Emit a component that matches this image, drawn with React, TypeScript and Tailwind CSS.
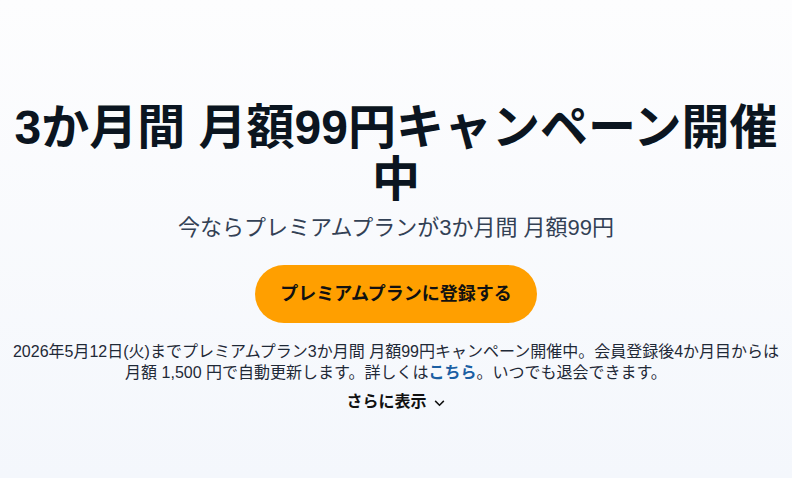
import React from 'react';

const font = { fontFamily: '"Liberation Sans", "Noto Sans CJK JP", sans-serif' };

export default function App() {
  return (
    <div
      className="min-h-[478px] w-full bg-gradient-to-b from-[#fdfdfe] to-[#f4f7fc] text-center"
      style={font}
    >
      <div className="mx-auto flex flex-col items-center px-2 pt-[102px]">
        <h1 className="text-[48px] font-bold leading-[52px] text-[#0b1520]">
          3か月間 月額99円キャンペーン開催中
        </h1>
        <p className="mt-[7px] text-[22px] leading-[30px] text-[#334155]">
          今ならプレミアムプランが3か月間 月額99円
        </p>
        <button className="mt-[22px] h-[58px] w-[282px] rounded-full bg-[#ff9f00] text-[18px] font-bold text-[#111]">
          プレミアムプランに登録する
        </button>
        <p className="mt-[18px] text-[16px] leading-[21px] text-[#1f2937]">
          2026年5月12日(火)までプレミアムプラン3か月間 月額99円キャンペーン開催中。会員登録後4か月目からは
          <br />
          月額 1,500 円で自動更新します。詳しくは
          <a className="font-bold text-[#1b5fa3]">こちら</a>
          。いつでも退会できます。
        </p>
        <button className="mt-[9px] flex items-center gap-[6px] text-[16px] font-bold leading-[20px] text-[#111]">
          さらに表示
          <svg width="13" height="13" viewBox="0 0 12 12" fill="none" stroke="currentColor" strokeWidth="1.4">
            <path d="M2 4.5l4 4 4-4" />
          </svg>
        </button>
      </div>
    </div>
  );
}
